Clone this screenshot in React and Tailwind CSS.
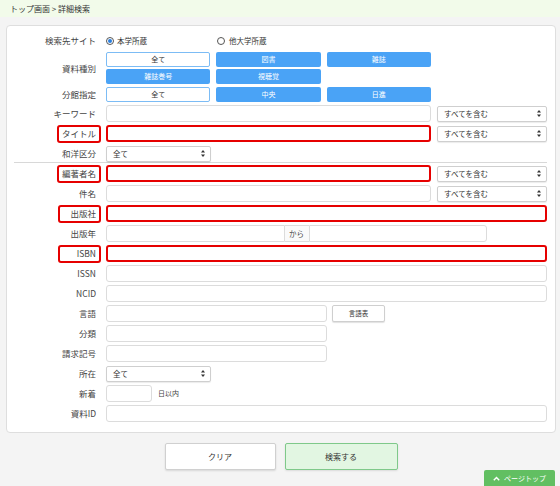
import React from 'react';

const font = { fontFamily: '"Noto Sans CJK JP", "Noto Sans", sans-serif' };

const Arrows = () => (
    <svg width="4" height="7" viewBox="0 0 4 7" className="shrink-0">
        <path d="M2 0 L4 2.5 L0 2.5 Z" fill="#333" />
        <path d="M0 4.5 L4 4.5 L2 7 Z" fill="#333" />
    </svg>
);

const Select = ({ text, className }) => (
    <div className={`h-[16px] flex items-center justify-between pl-[6px] pr-[5px] bg-white border border-[#cfcfcf] rounded-[2px] shadow-[0_1px_1px_rgba(0,0,0,0.08)] text-[7.5px] text-[#333] ${className}`}>
        <span>{text}</span>
        <Arrows />
    </div>
);

const Label = ({ text, red }) => (
    <div className="w-[94px] flex justify-end shrink-0">
        <span className={`min-w-[43px] h-[18px] flex items-center justify-end px-[3px] rounded-[3px] border-2 text-[8.5px] text-[#444] ${red ? 'border-[#e60000]' : 'border-transparent'}`}>
            {text}
        </span>
    </div>
);

const Input = ({ red, className }) => (
    <div className={`h-[17px] bg-white rounded-[3px] ${red ? 'border-2 border-[#e60000]' : 'border border-[#dcdcdc]'} ${className}`} />
);

const Row = ({ label, red, children, className = 'mb-[3px]' }) => (
    <div className={`flex items-center gap-[5px] h-[17px] ${className}`}>
        <Label text={label} red={red} />
        <div className="flex-1 flex items-center h-full">{children}</div>
    </div>
);

const Btn = ({ text, on }) => (
    <div className={`h-[15px] flex items-center justify-center rounded-[2px] text-[7px] ${on ? 'bg-[#4aa3f6] text-white' : 'bg-white border border-[#7cbcf5] text-[#333]'}`}>
        {text}
    </div>
);

export default function App() {
    return (
        <div className="relative h-[486px] overflow-hidden bg-[#f4f4f4]" style={font}>
            {/* breadcrumb */}
            <div className="h-[17px] bg-[#f2fbea] flex items-center pl-[10px] text-[8px] text-[#333]">
                トップ画面 &gt; 詳細検索
            </div>

            <div className="ml-[6px] mr-[4px] mt-[8px] bg-white border border-[#dedede] rounded-[4px] pt-[6px] pb-[10px] pr-[8px]">
                {/* 検索先サイト */}
                <div className="flex items-center gap-[5px] h-[17px] mb-[3px]">
                    <Label text="検索先サイト" />
                    <div className="flex items-center text-[7.5px] text-[#333]">
                        <div className="w-[111px] flex items-center gap-[3px]">
                            <span className="w-[8px] h-[8px] rounded-full border border-[#555] flex items-center justify-center">
                                <span className="w-[4px] h-[4px] rounded-full bg-[#2a7fe0]" />
                            </span>
                            本学所蔵
                        </div>
                        <div className="flex items-center gap-[4px]">
                            <span className="w-[8px] h-[8px] rounded-full border border-[#555]" />
                            他大学所蔵
                        </div>
                    </div>
                </div>

                {/* 資料種別 */}
                <div className="flex items-center gap-[5px] mb-[3px]">
                    <Label text="資料種別" />
                    <div className="w-[325px] grid grid-cols-3 gap-x-[6px] gap-y-[2px]">
                        <Btn text="全て" />
                        <Btn text="図書" on />
                        <Btn text="雑誌" on />
                        <Btn text="雑誌巻号" on />
                        <Btn text="視聴覚" on />
                    </div>
                </div>

                {/* 分館指定 */}
                <div className="flex items-center gap-[5px] h-[15px] mb-[3px]">
                    <Label text="分館指定" />
                    <div className="w-[325px] grid grid-cols-3 gap-x-[6px]">
                        <Btn text="全て" />
                        <Btn text="中央" on />
                        <Btn text="日進" on />
                    </div>
                </div>

                <Row label="キーワード">
                    <Input className="w-[325px]" />
                    <Select text="すべてを含む" className="ml-auto w-[110px]" />
                </Row>
                <Row label="タイトル" red>
                    <Input red className="w-[325px]" />
                    <Select text="すべてを含む" className="ml-auto w-[110px]" />
                </Row>
                <Row label="和洋区分" className="mb-0">
                    <Select text="全て" className="w-[105px] h-[15px]" />
                </Row>

                <div className="ml-[7px] border-t border-[#d8d8d8] mb-[2px]" />

                <Row label="編著者名" red>
                    <Input red className="w-[325px]" />
                    <Select text="すべてを含む" className="ml-auto w-[110px]" />
                </Row>
                <Row label="件名">
                    <Input className="w-[325px]" />
                    <Select text="すべてを含む" className="ml-auto w-[110px]" />
                </Row>
                <Row label="出版社" red>
                    <Input red className="flex-1" />
                </Row>
                <Row label="出版年">
                    <div className="flex h-[17px] w-[381px]">
                        <div className="flex-1 border border-[#dcdcdc] rounded-l-[3px]" />
                        <div className="w-[24px] border-y border-[#dcdcdc] bg-[#fafafa] flex items-center justify-center text-[7.5px] text-[#444]">から</div>
                        <div className="flex-1 border border-[#dcdcdc] rounded-r-[3px]" />
                    </div>
                </Row>
                <Row label="ISBN" red>
                    <Input red className="flex-1" />
                </Row>
                <Row label="ISSN">
                    <Input className="flex-1" />
                </Row>
                <Row label="NCID">
                    <Input className="flex-1" />
                </Row>
                <Row label="言語">
                    <Input className="w-[221px]" />
                    <div className="ml-[5px] w-[53px] h-[17px] flex items-center justify-center bg-white border border-[#cfcfcf] rounded-[2px] shadow-[0_1px_1px_rgba(0,0,0,0.12)] text-[6.5px] text-[#333]">
                        言語表
                    </div>
                </Row>
                <Row label="分類">
                    <Input className="w-[221px]" />
                </Row>
                <Row label="請求記号">
                    <Input className="w-[221px]" />
                </Row>
                <Row label="所在">
                    <Select text="全て" className="w-[105px] h-[15px]" />
                </Row>
                <Row label="新着">
                    <Input className="w-[46px]" />
                    <span className="ml-[6px] text-[7px] text-[#444]">日以内</span>
                </Row>
                <Row label="資料ID" className="mb-0">
                    <Input className="flex-1" />
                </Row>
            </div>

            {/* bottom buttons */}
            <div className="flex justify-center gap-[9px] mt-[10px] pl-[2px]">
                <div className="w-[111px] h-[27px] flex items-center justify-center bg-white border border-[#d0d0d0] rounded-[2px] shadow-[0_1px_2px_rgba(0,0,0,0.12)] text-[8px] text-[#333]">
                    クリア
                </div>
                <div className="w-[113px] h-[27px] flex items-center justify-center bg-[#e2f6e2] border border-[#7fc98a] rounded-[2px] shadow-[0_1px_2px_rgba(0,0,0,0.1)] text-[8px] text-[#333]">
                    検索する
                </div>
            </div>

            {/* page top */}
            <div className="absolute right-[5px] bottom-0 w-[71px] h-[16px] bg-[#62bf62] rounded-t-[2px] flex items-center justify-center gap-[4px] text-white text-[7px]">
                <svg width="7" height="5" viewBox="0 0 7 5">
                    <path d="M0.8 4.2 L3.5 1.4 L6.2 4.2" fill="none" stroke="white" strokeWidth="1.4" />
                </svg>
                ページトップ
            </div>
        </div>
    );
}
